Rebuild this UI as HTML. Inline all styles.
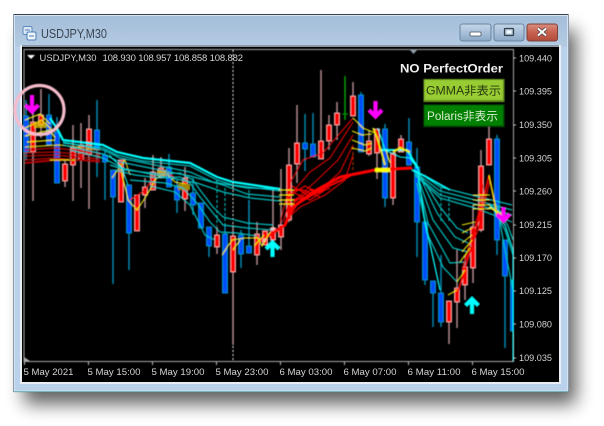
<!DOCTYPE html>
<html><head><meta charset="utf-8"><style>
html,body{margin:0;padding:0;background:#fff}
body{width:604px;height:426px;overflow:hidden;position:relative;font-family:"Liberation Sans","Noto Sans CJK JP",sans-serif}
svg{position:absolute;left:0;top:0}
</style></head><body>
<svg width="604" height="426" viewBox="0 0 604 426" xmlns="http://www.w3.org/2000/svg" style="shape-rendering:geometricPrecision">
<defs>
<linearGradient id="tb" x1="0" y1="0" x2="0" y2="1"><stop offset="0" stop-color="#a3bcd8"/><stop offset="1" stop-color="#b4cbe3"/></linearGradient>
<linearGradient id="btn" x1="0" y1="0" x2="0" y2="1"><stop offset="0" stop-color="#c4d6e8"/><stop offset=".5" stop-color="#a9c0d8"/><stop offset="1" stop-color="#8aa8c6"/></linearGradient>
<linearGradient id="cls" x1="0" y1="0" x2="0" y2="1"><stop offset="0" stop-color="#d98d80"/><stop offset=".5" stop-color="#c8604e"/><stop offset="1" stop-color="#b04a3a"/></linearGradient>
<filter id="sh" x="-15%" y="-15%" width="130%" height="130%"><feGaussianBlur stdDeviation="9"/></filter>
<filter id="b1"><feGaussianBlur stdDeviation=".4"/></filter>
<filter id="b2"><feGaussianBlur stdDeviation=".35"/></filter>
</defs>
<rect x="24" y="30" width="552" height="374" fill="#000" opacity=".62" filter="url(#sh)"/>
<rect x="13.500" y="14" width="555" height="378" fill="#b9d1ea"/>
<rect x="13.500" y="14" width="555" height="33" fill="url(#tb)"/>
<path d="M13.500 14.500H568.500" stroke="#3a4046" stroke-width="1"/>
<path d="M13.500 14V392M568.500 14V392" stroke="#8a9aa8" stroke-width="1"/>
<path d="M14 391.500H568.500" stroke="#1f8088" stroke-width="1.200"/>
<path d="M14.500 15.500H567.500V391H14.500Z" fill="none" stroke="#d5e4f2" stroke-width="1"/>
<rect x="20" y="45" width="540" height="2" fill="#8a98a6"/>
<rect x="20" y="45" width="2" height="339" fill="#e8eef4"/>
<rect x="20" y="382" width="540" height="2" fill="#e8eef4"/>
<rect x="559" y="45" width="2" height="339" fill="#e8eef4"/>
<rect x="22" y="47" width="537" height="335" fill="#000"/>
<!-- title icon -->
<g filter="url(#b2)">
<rect x="23" y="26.500" width="9" height="8" rx="1.500" fill="#dbe9f6" stroke="#5d89bb"/>
<rect x="27" y="32" width="9" height="8" rx="1.500" fill="#eef5fb" stroke="#4f7fb5"/>
<path d="M25 30h5M29 36h5" stroke="#4f7fb5" stroke-width="1"/>
</g>
<text x="41" y="38" font-size="12.500" fill="#3a4450" textLength="66" lengthAdjust="spacingAndGlyphs" filter="url(#b2)">USDJPY,M30</text>
<!-- window buttons -->
<g filter="url(#b2)">
<rect x="460" y="24" width="31" height="17" rx="2.500" fill="url(#btn)" stroke="#6b84a0"/>
<rect x="470" y="32" width="11" height="4" rx="1" fill="#fff" stroke="#46525e" stroke-width=".8"/>
<rect x="494" y="24" width="30" height="17" rx="2.500" fill="url(#btn)" stroke="#6b84a0"/>
<rect x="504.500" y="28.500" width="9" height="7" rx="1" fill="none" stroke="#33404c" stroke-width="1.300"/>
<rect x="506.500" y="30.500" width="5" height="3" fill="#fff"/>
<rect x="527" y="24" width="30.500" height="17" rx="2.500" fill="url(#cls)" stroke="#7d4038"/>
<path d="M538 28.500l8 7M546 28.500l-8 7" stroke="#3e3a3a" stroke-width="3.400"/>
<path d="M538 28.500l8 7M546 28.500l-8 7" stroke="#fff" stroke-width="2"/>
</g>
<g filter="url(#b1)">
<!-- axes -->
<path d="M24 49.500H513.500V361.500H24Z" fill="none" stroke="#a8a8a8" stroke-width="1"/>
<path d="M513 58h3M513 91h3M513 125h3M513 158h3M513 191h3M513 225h3M513 258h3M513 291h3M513 324h3M513 358h3" stroke="#c8c8c8" stroke-width="1"/>
<path d="M24.500 362v3M88.500 362v3M152.500 362v3M216.500 362v3M280.500 362v3M344.500 362v3M408.500 362v3M472.500 362v3" stroke="#c8c8c8" stroke-width="1"/>
<path d="M24 357l6 4h-6z" fill="#a8a8a8"/>
<path d="M27 55h8l-4 4z" fill="#fff"/>
<path d="M409 49h9l-4.500 5z" fill="#8c98a4"/>
<!-- dotted period separator -->
<path d="M233 50V362" stroke="#eee" stroke-width="1" stroke-dasharray="2 2"/>
<!-- dashed teal wicks -->
<path d="M217 180V226M225 188V226M249 190V224M441 188V222M449 198V222" stroke="#00b0b0" stroke-width="1.200" stroke-dasharray="3 2"/>
<path d="M353 147V172" stroke="#a03000" stroke-width="1.200" stroke-dasharray="3 2"/>
<!-- wicks -->
<path d="M33 95V201M41 89V138M65 160V187M73 125V201M81 123V188M89 115V209M145 178V208M153 155V190M161 157V172M185 167V211M217 227V254M233 225V345M257 222V265M273 188V240M281 169V250M289 148V222M297 105V183M321 70V158M329 115V150M337 102V140M353 82V116M369 130V156M377 129V179M393 153V205M401 135V152M449 322V344M457 250V328M465 255V300M473 205V283M481 150V232M489 125V165" stroke="#b08a8e" stroke-width="1.500" fill="none"/>
<path d="M26 100V160M49 94V117M57 117V183M97 100V177M105 150V200M113 170V284M129 185V270M169 154V187M177 180V213M193 178V215M209 227V257M225 225V293M241 230V268M249 200V253M305 114V171M313 113V157M361 92V152M385 124V207M409 118V165M417 148V257M425 222V285M433 293V327M441 255V327M497 135V255M505 240V348" stroke="#0088b0" stroke-width="1.500" fill="none"/>
<path d="M345 76V120" stroke="#00a000" stroke-width="1.500"/>
<path d="M342 114h6" stroke="#00a000" stroke-width="1"/>
<!-- bodies blue -->
<g fill="#0050ff" stroke="#0090c0" stroke-width="1">
<rect x="23.500" y="116" width="5" height="36"/><rect x="46.500" y="115" width="5" height="30"/><rect x="54.500" y="132" width="5" height="51"/>
<rect x="94.500" y="130" width="5" height="20"/><rect x="102.500" y="155" width="5" height="7"/><rect x="110.500" y="170" width="5" height="27"/>
<rect x="126.500" y="185" width="5" height="48"/><rect x="166.500" y="167" width="5" height="20"/><rect x="174.500" y="187" width="5" height="13"/>
<rect x="190.500" y="193" width="5" height="12"/><rect x="198.500" y="203" width="5" height="25"/><rect x="206.500" y="227" width="5" height="19"/>
<rect x="222.500" y="234" width="5" height="59"/><rect x="238.500" y="235" width="5" height="19"/><rect x="246.500" y="246" width="5" height="7"/>
<rect x="302.500" y="143" width="5" height="6"/><rect x="310.500" y="144" width="5" height="13"/><rect x="358.500" y="95" width="5" height="57"/>
<rect x="382.500" y="129" width="5" height="69"/><rect x="406.500" y="142" width="5" height="23"/><rect x="414.500" y="167" width="5" height="55"/>
<rect x="422.500" y="222" width="5" height="58"/><rect x="430.500" y="281" width="5" height="12"/><rect x="438.500" y="293" width="5" height="29"/>
<rect x="494.500" y="139" width="5" height="101"/><rect x="502.500" y="240" width="5" height="36"/><rect x="510.500" y="280" width="3" height="51"/>
</g>
<!-- bodies red -->
<g fill="#ff0000" stroke="#f0a0a0" stroke-width="1">
<rect x="30.500" y="122" width="5" height="30"/><rect x="38.500" y="115" width="5" height="10"/><rect x="62.500" y="164" width="5" height="17"/>
<rect x="70.500" y="148" width="5" height="17"/><rect x="78.500" y="145" width="5" height="15"/><rect x="86.500" y="129" width="5" height="26"/>
<rect x="118.500" y="160" width="5" height="42"/><rect x="134.500" y="195" width="5" height="36"/><rect x="142.500" y="187" width="5" height="8"/>
<rect x="150.500" y="172" width="5" height="18"/><rect x="158.500" y="168" width="5" height="9"/><rect x="182.500" y="178" width="5" height="21"/>
<rect x="214.500" y="235" width="5" height="12"/><rect x="230.500" y="236" width="5" height="36"/><rect x="254.500" y="234" width="5" height="21"/>
<rect x="262.500" y="231" width="5" height="14"/><rect x="270.500" y="228" width="5" height="12"/><rect x="278.500" y="225" width="5" height="12"/>
<rect x="286.500" y="165" width="5" height="55"/><rect x="294.500" y="143" width="5" height="21"/><rect x="318.500" y="141" width="5" height="18"/>
<rect x="326.500" y="125" width="5" height="16"/><rect x="334.500" y="113" width="5" height="12"/><rect x="350.500" y="96" width="5" height="20"/>
<rect x="366.500" y="141" width="5" height="13"/><rect x="374.500" y="129" width="5" height="24"/><rect x="390.500" y="153" width="5" height="45"/>
<rect x="398.500" y="139" width="5" height="13"/><rect x="446.500" y="301" width="5" height="21"/><rect x="454.500" y="288" width="5" height="14"/>
<rect x="462.500" y="267" width="5" height="18"/><rect x="470.500" y="227" width="5" height="41"/><rect x="478.500" y="166" width="5" height="64"/>
<rect x="486.500" y="139" width="5" height="26"/>
</g>
<!-- left dark red/yellow bundle -->
<g fill="none" stroke-width="1.200">
<path d="M25 147L60 145 100 150" stroke="#c8c800"/><path d="M25 150L55 148 100 153" stroke="#c00000"/><path d="M25 153L55 152 100 156" stroke="#c00000"/>
<path d="M25 156L55 155 100 159" stroke="#c00000"/><path d="M25 160L55 158 100 162" stroke="#c00000"/><path d="M25 163L55 160 80 160 100 161" stroke="#b00000" stroke-width="2"/>
<path d="M50 160H75" stroke="#d8d800" stroke-width="1.300"/>
<path d="M76 150L88 147 100 150M70 160L90 150 100 155" stroke="#c00000"/>
<path d="M25 120L40 114 50 124M25 128L42 120 52 130M25 136L50 130 55 138M27 142L55 140" stroke="#e8e800"/>
<path d="M34 122H46V128H34Z" fill="#e0c000" stroke="none" opacity=".8"/>
<path d="M120 165L128 200 137 210 147 195 155 180 165 172 175 182 190 185" stroke="#e8e800" stroke-width="1.100"/>
<path d="M112 178L125 160 130 175" stroke="#d8d800" stroke-width="1.100"/>
<path d="M130 200L145 190 155 175 165 170 175 178" stroke="#e80000" stroke-width="1.300"/>
<path d="M157 170H166V176H157Z" fill="#e0a000" stroke="none"/>
<path d="M178 184H190V190H178Z" fill="#a08800" stroke="none"/>
</g>
<!-- teal fans -->
<g fill="none" stroke="#00c0c0" stroke-width="1.200">
<path d="M63 142L103 150 120 158 150 164 190 172 213 182 247 188 280 189"/>
<path d="M63 145L103 154 120 162 150 168 190 176 223 185 247 194 280 197"/>
<path d="M70 150L103 158 122 168 150 174 197 183 223 192 250 198 280 201"/>
<path d="M110 165L125 170 160 174 180 173 193 180 200 190 213 207 223 217 247 223 273 225"/>
<path d="M115 170L135 175 160 178 180 177 190 183 200 197 213 213 223 225 247 228 273 230"/>
<path d="M130 180L165 183 183 188 197 203 210 222 220 232 237 233 257 236"/>
<path d="M150 186L175 192 190 205 205 235 215 240"/>
<path d="M415 170L440 187 475 196 512 205"/><path d="M415 172L440 191 475 200 512 210"/><path d="M415 174L440 195 475 204 512 215"/><path d="M415 175L440 198 475 208 512 222"/>
<path d="M420 175L440 207 457 228 468 233"/><path d="M420 177L437 213 455 237 468 243"/><path d="M418 178L433 220 453 248 468 252"/><path d="M418 180L428 223 450 263 465 262"/><path d="M417 183L427 233 443 267 457 282"/><path d="M417 183L440 290"/>
<path d="M492 205L505 230 513 255M495 203L508 226 513 240M498 210L504 245 513 290"/>
</g>
<!-- cyan bundle -->
<g fill="none" stroke="#00ffff">
<path d="M50 118L58 130 63 140 103 145 117 152 143 158 190 163 217 177 233 182 280 189" stroke-width="2.200"/>
<path d="M63 143L103 148 117 155 143 161 190 166 217 180 233 185 280 191" stroke-width="1" stroke="#00e0e0"/>
<path d="M109 155L122 168 128 185" stroke-width="1"/>
<path d="M380 150L390 150 407 150 418 168" stroke-width="2"/>
<path d="M378 128L385 150 400 157 410 158 420 172" stroke-width="1.100"/>
<path d="M412 170L425 176 450 190" stroke-width="1.800"/>
<path d="M418 172L425 222 440 290" stroke-width="1"/>
<path d="M490 205L505 225 513 250V361" stroke-width="1.100"/>
</g>
<!-- red fan -->
<g fill="none" stroke="#e00000" stroke-width="1.100">
<path d="M280 223L290 183 303 160 323 153 353 118"/><path d="M283 222L292 193 310 172 330 158 353 122"/>
<path d="M285 222L295 200 315 182 338 160 353 135"/><path d="M286 222L297 205 320 190 340 172 353 145"/>
<path d="M288 218L300 207 325 195 345 180 353 155"/>
</g>
<g fill="none" stroke="#ff0000" stroke-width="1.200">
<path d="M290 190L303 190 320 197M290 195L305 186 320 193M290 200L305 198 320 190M292 186L310 196 322 186M292 204L310 190 322 192M292 192L310 200 325 190M295 206L312 195 330 188"/>
</g>
<path d="M257 243L273 233 285 225 293 207 313 192 340 177 375 170 412 168" fill="none" stroke="#ff0000" stroke-width="3"/>
<path d="M305 199L325 188 350 176" fill="none" stroke="#ff0000" stroke-width="2"/>
<path d="M458 292L472 245 482 205 489 175 497 215" fill="none" stroke="#ff0000" stroke-width="1.600"/>
<path d="M462 270L478 215 483 185M466 260L478 230 490 180" fill="none" stroke="#d80000" stroke-width="1.300"/>
<!-- yellow -->
<g fill="none" stroke="#e8e800" stroke-width="1.100">
<path d="M222 255L232 240 245 238 258 238 262 246 270 232M233 250L240 240M254 246L264 235"/>
<path d="M353 118L363 128 375 133M352 131L362 135 372 134M352 140L365 145 372 143M352 148L365 151 372 148"/>
<path d="M373 128L378 140 385 165" stroke-width="1.800"/>
<path d="M386 150L390 163"/>
<path d="M375 170H390" stroke="#ffff00" stroke-width="4.500"/>
<path d="M393 152L400 148 410 152" stroke-width="2.200"/>
<path d="M462 225L475 222M462 233L472 228M462 243L472 235M462 252L472 240M460 262L470 248M457 282L465 270M448 295L457 290"/>
<path d="M489 175L497 215" stroke-width="1.300"/>
<path d="M489 207L503 215" stroke-width="1.800"/>
<path d="M473 195H490M473 200H490M473 205H490M473 209H490"/>
<path d="M279 190H294M279 195H294M279 200H294M279 204H294" stroke-width="1.300"/>
</g>
<circle cx="264" cy="240" r="2" fill="#fff" opacity=".6"/><circle cx="273" cy="229" r="2" fill="#fff" opacity=".6"/>
<!-- arrows -->
<path d="M32 95V110M25.500 105L32 111.500 38.500 105" fill="none" stroke="#ff00ff" stroke-width="4.200"/>
<path d="M375.500 101V116M369 110L375.500 116.500 382 110" fill="none" stroke="#ff00ff" stroke-width="4.200"/>
<path d="M503.500 207V220M497 214L503.500 220.500 510 214" fill="none" stroke="#ff00ff" stroke-width="4.200"/>
<path d="M272.500 257V243M266 249L272.500 242.500 279 249" fill="none" stroke="#00ffff" stroke-width="4.200"/>
<path d="M472 314V299M465.500 305.500L472 299 478.500 305.500" fill="none" stroke="#00ffff" stroke-width="4.200"/>
<!-- circle -->
<circle cx="39.500" cy="110" r="24.500" fill="none" stroke="#f6bccb" stroke-width="3.200"/>
<!-- buttons -->
<rect x="424" y="79.500" width="80" height="22" fill="#97cc33" stroke="#6a9a22"/>
<rect x="424" y="105" width="80" height="21.500" fill="#008000" stroke="#045a04"/>
<path d="M424.500 100.500H503.500V80" fill="none" stroke="#5c8a1c"/>
<path d="M424.500 126H503.500V105.500" fill="none" stroke="#034a03"/>
</g>
<!-- text -->
<g font-size="9.500" fill="#d4d4d4" filter="url(#b2)">
<text x="39.500" y="61" textLength="57" lengthAdjust="spacingAndGlyphs">USDJPY,M30</text>
<text x="102.500" y="61" textLength="140.500" lengthAdjust="spacing">108.930 108.957 108.858 108.882</text>
<g>
<text x="519" y="61.500" textLength="33" lengthAdjust="spacingAndGlyphs">109.440</text>
<text x="519" y="94.500" textLength="33" lengthAdjust="spacingAndGlyphs">109.395</text>
<text x="519" y="128" textLength="33" lengthAdjust="spacingAndGlyphs">109.350</text>
<text x="519" y="161.500" textLength="33" lengthAdjust="spacingAndGlyphs">109.305</text>
<text x="519" y="194.500" textLength="33" lengthAdjust="spacingAndGlyphs">109.260</text>
<text x="519" y="228" textLength="33" lengthAdjust="spacingAndGlyphs">109.215</text>
<text x="519" y="261" textLength="33" lengthAdjust="spacingAndGlyphs">109.170</text>
<text x="519" y="294" textLength="33" lengthAdjust="spacingAndGlyphs">109.125</text>
<text x="519" y="327.500" textLength="33" lengthAdjust="spacingAndGlyphs">109.080</text>
<text x="519" y="361" textLength="33" lengthAdjust="spacingAndGlyphs">109.035</text>
</g>
<g>
<text x="23.500" y="375" textLength="50" lengthAdjust="spacingAndGlyphs">5 May 2021</text>
<text x="87.500" y="375" textLength="53" lengthAdjust="spacingAndGlyphs">5 May 15:00</text>
<text x="151.500" y="375" textLength="53" lengthAdjust="spacingAndGlyphs">5 May 19:00</text>
<text x="215.500" y="375" textLength="53" lengthAdjust="spacingAndGlyphs">5 May 23:00</text>
<text x="279.500" y="375" textLength="53" lengthAdjust="spacingAndGlyphs">6 May 03:00</text>
<text x="343.500" y="375" textLength="53" lengthAdjust="spacingAndGlyphs">6 May 07:00</text>
<text x="407.500" y="375" textLength="53" lengthAdjust="spacingAndGlyphs">6 May 11:00</text>
<text x="471.500" y="375" textLength="53" lengthAdjust="spacingAndGlyphs">6 May 15:00</text>
</g>
</g>
<text x="400" y="72.500" font-size="12" font-weight="bold" fill="#f0f0f0" textLength="103" lengthAdjust="spacingAndGlyphs" filter="url(#b2)">NO PerfectOrder</text>
<text x="426" y="94.500" font-size="11.500" fill="#2a3a10" textLength="75" lengthAdjust="spacingAndGlyphs" filter="url(#b2)">GMMA非表示</text>
<text x="427" y="120" font-size="11.500" fill="#d8ecd0" textLength="71" lengthAdjust="spacingAndGlyphs" filter="url(#b2)">Polaris非表示</text>
</svg>
</body></html>
